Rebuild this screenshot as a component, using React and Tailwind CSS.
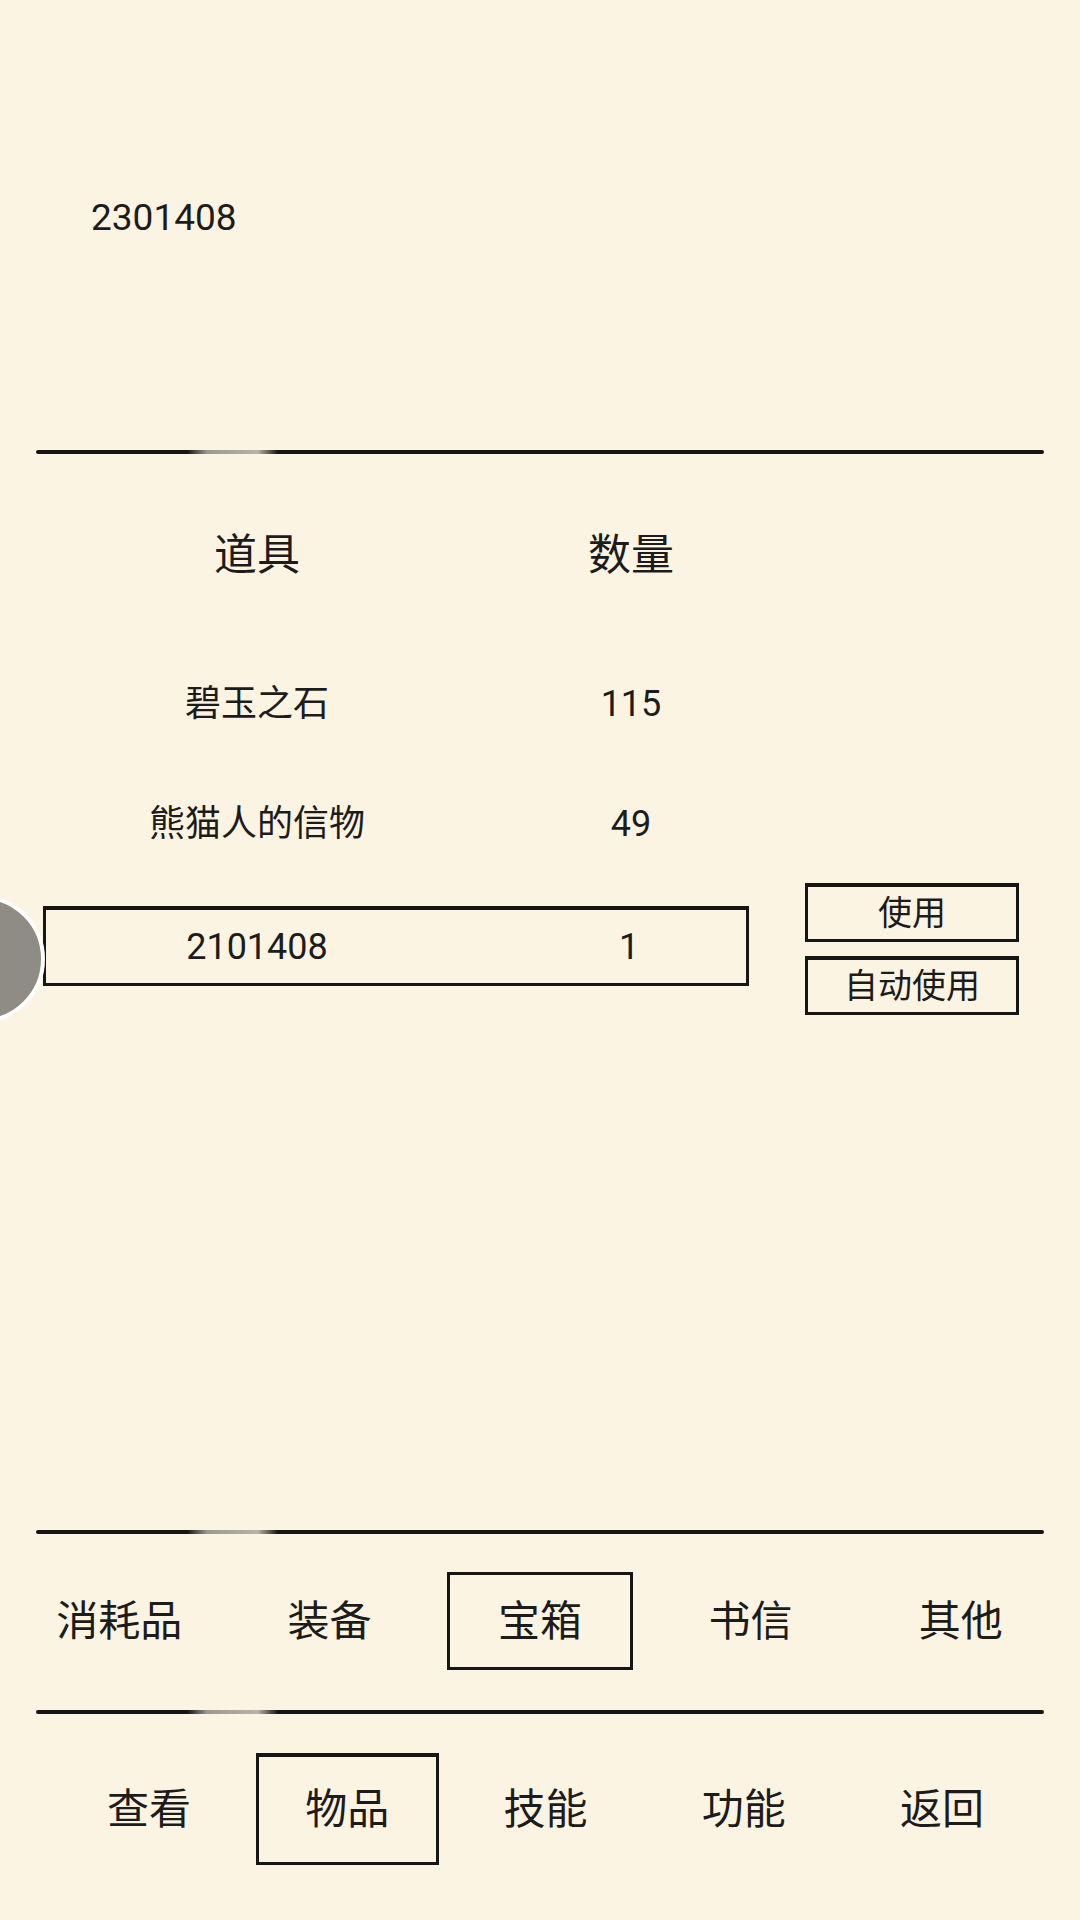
import React from 'react';

const font = { fontFamily: 'Roboto, "Noto Sans CJK SC", sans-serif' };

function Rule() {
  return (
    <div className="mx-[36px] h-[4px] rounded-full bg-[linear-gradient(to_right,#151515_0%,#151515_15%,#9a9a93_17%,#b5b3aa_22%,#151515_24%,#151515_100%)]" />
  );
}

const tabs = ['消耗品', '装备', '宝箱', '书信', '其他'];
const nav = ['查看', '物品', '技能', '功能', '返回'];

export default function App() {
  return (
    <div
      className="relative w-[1080px] h-[1920px] overflow-hidden bg-[#fcf4e3] text-[#1c1c1c] flex flex-col"
      style={font}
    >
      {/* top info */}
      <div className="h-[450px] shrink-0 pl-[91px] pt-[196px]">
        <div className="text-[37px] leading-[44px]">2301408</div>
      </div>
      <Rule />

      {/* item list */}
      <div className="flex-1 flex flex-col">
        <div className="mt-[41px] h-[120px] flex items-center pl-[43px] text-[43px]">
          <div className="w-[428px] text-center">道具</div>
          <div className="w-[320px] text-center">数量</div>
        </div>
        <div className="mt-[29px] h-[120px] flex items-center pl-[43px] text-[36px]">
          <div className="w-[428px] text-center">碧玉之石</div>
          <div className="w-[320px] text-center">115</div>
        </div>
        <div className="h-[119px] flex items-center pl-[43px] text-[36px]">
          <div className="w-[428px] text-center">熊猫人的信物</div>
          <div className="w-[320px] text-center">49</div>
        </div>
        <div className="h-[132px] flex items-center pl-[43px]">
          <div className="w-[706px] h-[80px] mb-[6px] flex items-center border-[3px] border-t-[4px] border-[#161616] text-[36px]">
            <div className="w-[422px] shrink-0 text-center">2101408</div>
            <div className="w-[322px] shrink-0 text-center">1</div>
          </div>
          <div className="ml-[56px] w-[214px] flex flex-col gap-[14px] text-[34px]">
            <button className="h-[59px] border-[3px] border-t-[4px] border-[#161616] flex items-center justify-center leading-none">
              使用
            </button>
            <button className="h-[59px] border-[3px] border-t-[4px] border-[#161616] flex items-center justify-center leading-none">
              自动使用
            </button>
          </div>
        </div>
      </div>

      {/* category tabs */}
      <Rule />
      <div className="h-[176px] shrink-0 pt-[38px]">
        <div className="mx-[14px] grid grid-cols-5 h-[98px] text-[42px]">
          {tabs.map((t) => (
            <div key={t} className="flex items-center justify-center">
              {t === '宝箱' ? (
                <div className="w-[186px] h-[98px] border-[3px] border-[#161616] flex items-center justify-center">
                  {t}
                </div>
              ) : (
                t
              )}
            </div>
          ))}
        </div>
      </div>

      {/* bottom nav */}
      <Rule />
      <div className="h-[206px] shrink-0 pt-[39px]">
        <div className="ml-[50px] w-[991px] grid grid-cols-5 h-[112px] text-[42px]">
          {nav.map((t) => (
            <div key={t} className="flex items-center justify-center">
              {t === '物品' ? (
                <div className="w-[183px] h-[112px] border-[3px] border-t-[4px] border-[#161616] flex items-center justify-center">
                  {t}
                </div>
              ) : (
                t
              )}
            </div>
          ))}
        </div>
      </div>

      {/* floating ball */}
      <div className="absolute left-[-83px] top-[895px] w-[128px] h-[128px] rounded-full bg-[#8e8c84] border-[4px] border-white" />
    </div>
  );
}
